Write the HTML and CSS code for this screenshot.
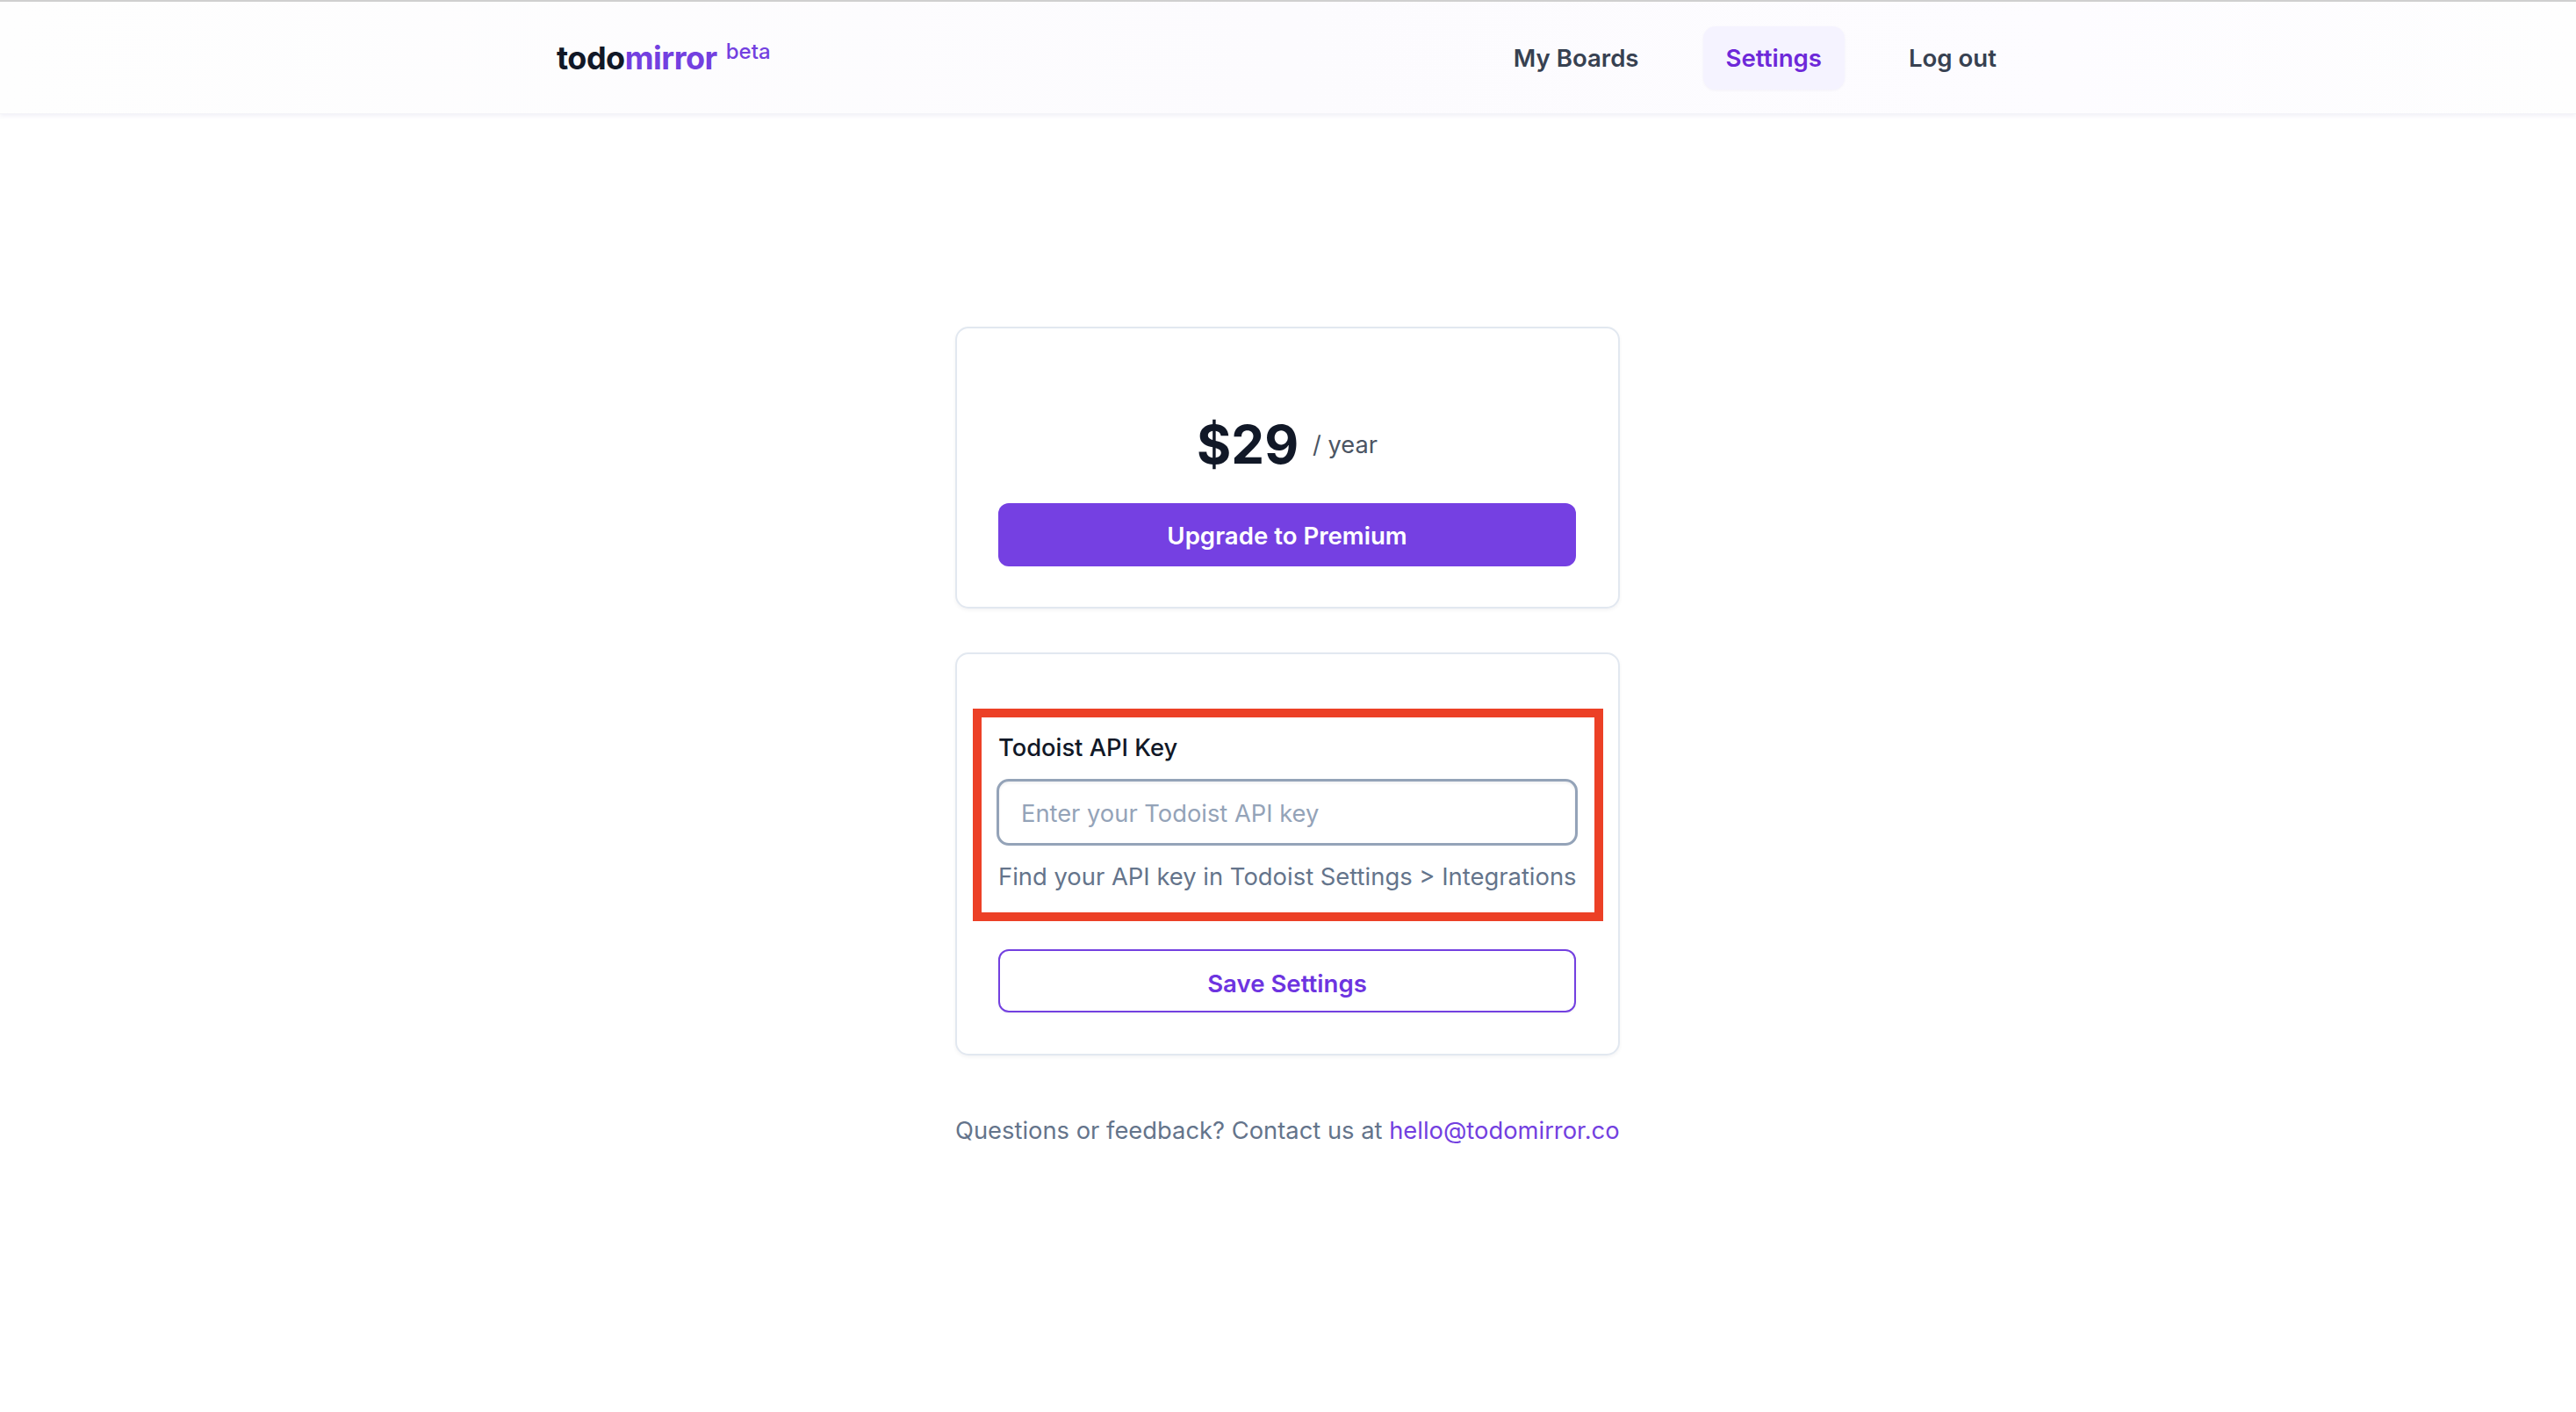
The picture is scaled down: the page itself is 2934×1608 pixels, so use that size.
FILE: index.html
```html
<!DOCTYPE html>
<html lang="en">
<head>
<meta charset="utf-8">
<title>todomirror settings</title>
<link rel="stylesheet" href="styles.css">
</head>
<body>
<header class="topbar">
  <div class="topbar-inner">
    <a class="logo" href="#"><span class="logo-dark">todo</span><span class="logo-accent">mirror</span><sup class="logo-beta">beta</sup></a>
    <nav class="nav">
      <a class="nav-link" href="#">My Boards</a>
      <a class="nav-link nav-link-active" href="#">Settings</a>
      <a class="nav-link" href="#">Log out</a>
    </nav>
  </div>
</header>
<main class="content">
  <section class="card card-price">
    <div class="price-row"><span class="price">$29</span><span class="period">/ year</span></div>
    <button class="btn btn-solid" type="button">Upgrade to Premium</button>
  </section>
  <section class="card card-settings">
    <div class="field highlighted">
      <label class="field-label" for="key">Todoist API Key</label>
      <input class="field-input" id="key" type="text" placeholder="Enter your Todoist API key">
      <p class="field-help">Find your API key in Todoist Settings &gt; Integrations</p>
    </div>
    <button class="btn btn-outline" type="button">Save Settings</button>
  </section>
  <p class="contact">Questions or feedback? Contact us at <a class="contact-link" href="#">hello@todomirror.co</a></p>
</main>
</body>
</html>
```

FILE: styles.css
```css
* { box-sizing: border-box; }
html, body { margin: 0; padding: 0; }
body {
  min-height: 1608px;
  background: #ffffff;
  font-family: Inter, "Liberation Sans", sans-serif;
  color: #111827;
}
a { text-decoration: none; }
.topbar {
  height: 130px;
  border-top: 2px solid #cfcfcf;
  background: linear-gradient(90deg, #fefefe 0%, #fcfbfe 50%, #fdfcff 80%, #fefefe 100%);
  box-shadow: 0 2px 5px rgba(80, 70, 150, 0.08);
  border-bottom: 1px solid #f3f3f8;
}
.topbar-inner {
  width: 1666px;
  height: 128px;
  margin: 0 auto;
  padding-right: 1px;
  display: flex;
  align-items: center;
  justify-content: space-between;
}
.logo { font-size: 36px; font-weight: 650; letter-spacing: -0.5px; }
.logo-dark { color: #111827; }
.logo-accent { color: #7340e0; }
.logo-beta { font-size: 24px; font-weight: 500; color: #7340e0; margin-left: 10px; letter-spacing: 0; vertical-align: 12px; line-height: 0; }
.nav { display: flex; align-items: center; gap: 48px; }
.nav-link {
  display: block;
  height: 72px;
  line-height: 72px;
  padding: 0 25px;
  border-radius: 14px;
  font-size: 27.6px;
  font-weight: 570;
  color: #374151;
}
.nav-link-active {
  padding: 0 26px;
  background: #f5f3ff;
  color: #6d28d9;
  font-weight: 640;
  box-shadow: 0 1px 3px rgba(80, 70, 150, 0.06);
}
.content { width: 758px; padding-right: 1px; margin: 242px auto 0; }
.card {
  border: 2px solid #e2e8f0;
  border-radius: 15px;
  background: #ffffff;
  box-shadow: 0 2px 4px rgba(15, 23, 42, 0.05);
  padding-left: 47px;
  padding-right: 48px;
}
.card-price { padding-top: 95px; padding-bottom: 46px; }
.card-settings { margin-top: 50px; padding-top: 87px; padding-bottom: 47px; }
.price-row { display: flex; justify-content: center; align-items: center; gap: 16px; height: 75px; line-height: 75px; }
.price { font-size: 60px; font-weight: 700; color: #111827; }
.period { font-size: 27.2px; font-weight: 430; color: #4b5563; }
.btn {
  display: block;
  width: 100%;
  height: 72px;
  border-radius: 12px;
  font-family: inherit;
  font-size: 27.6px;
  font-weight: 580;
  text-align: center;
}
.btn-solid { margin-top: 29px; border: 0; padding-top: 2px; background: #7540e2; color: #ffffff; }
.btn-outline { margin-top: 63px; border: 2px solid #7340e0; padding-top: 6px; background: #ffffff; color: #6d34e0; box-shadow: 0 1px 3px rgba(15, 23, 42, 0.06); }
.field { position: relative; }
.highlighted::after {
  content: "";
  position: absolute;
  top: -25px;
  bottom: -31px;
  left: -29px;
  right: -31px;
  border: 10px solid #ec4026;
  pointer-events: none;
}
.field-label { display: block; height: 40px; line-height: 40px; font-size: 27.3px; font-weight: 540; color: #111827; }
.field-input {
  display: block;
  width: 662px;
  height: 76px;
  margin: 15px 0 0 -2px;
  padding: 2px 25px 0;
  border: 3px solid #94a3b8;
  border-radius: 14px;
  background: #ffffff;
  font-family: inherit;
  font-size: 27.3px;
  font-weight: 430;
  color: #111827;
  box-shadow: inset 0 2px 3px rgba(15, 23, 42, 0.06);
  outline: none;
}
.field-input::placeholder { color: #94a3b8; opacity: 1; }
.field-help { margin: 16px 0 0; height: 39px; line-height: 39px; font-size: 27.4px; font-weight: 430; color: #64748b; white-space: nowrap; }
.contact { margin: 62px 0 0; line-height: 47px; font-size: 27.35px; font-weight: 430; color: #64748b; white-space: nowrap; }
.contact-link { color: #7340e0; }
```
